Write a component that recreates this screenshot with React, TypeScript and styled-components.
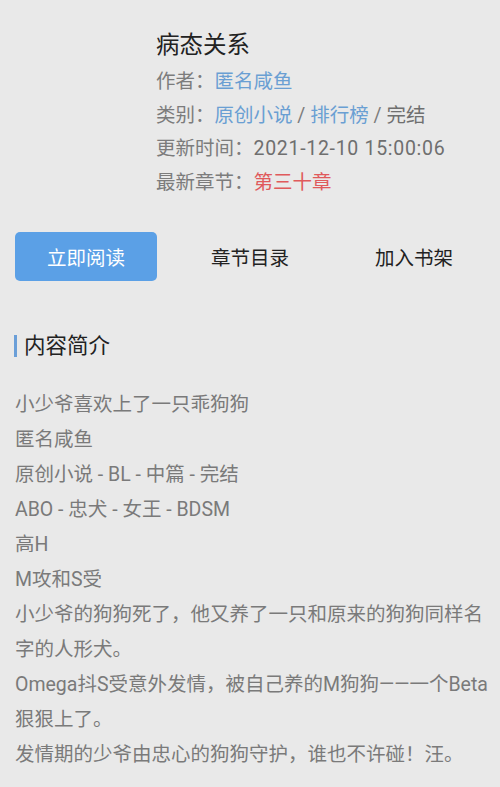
import styled, { createGlobalStyle } from "styled-components";

const GlobalStyle = createGlobalStyle`
  html, body {
    margin: 0;
    padding: 0;
    background: #e9e9e9;
  }
  body {
    font-family: Roboto, "Noto Sans CJK SC", "Noto Sans", sans-serif;
  }
`;

const Page = styled.main`
  min-height: 787px;
  background: #e9e9e9;
  padding: 0 15px;
  box-sizing: border-box;
`;

/* 书籍信息 */
const Info = styled.section`
  padding: 28px 0 0 141px;
`;

const Title = styled.h1`
  margin: 0 0 3px;
  font-size: 23.5px;
  font-weight: 400;
  line-height: 34px;
  color: #222;
`;

const InfoRow = styled.div`
  font-size: 19.5px;
  line-height: 33.5px;
  color: #7c7c7c;
  white-space: nowrap;
`;

const Link = styled.span`
  color: #6a9fd3;
`;

const Latest = styled.span`
  color: #e05a5c;
`;

const Value = styled.span`
  color: #6f6f6f;
`;

const Time = styled(Value)`
  letter-spacing: 0.7px;
`;

/* 操作按钮 */
const Actions = styled.div`
  display: flex;
  gap: 22px;
  margin-top: 33px;
`;

const ActionButton = styled.button<{ $primary?: boolean }>`
  width: 143px;
  height: 49px;
  border: 0;
  border-radius: 5px;
  font-family: inherit;
  font-size: 19.5px;
  padding: 0;
  background: ${({ $primary }) => ($primary ? "#5ba0e6" : "transparent")};
  color: ${({ $primary }) => ($primary ? "#fff" : "#222")};
`;

/* 内容简介 */
const SectionTitle = styled.h2`
  display: flex;
  align-items: center;
  gap: 7px;
  margin: 49px 0 0 -1px;
  font-size: 21.5px;
  font-weight: 400;
  line-height: 32px;
  color: #222;
  &::before {
    content: "";
    width: 3px;
    height: 22px;
    background: #6b9fd8;
  }
`;

const Intro = styled.div`
  margin-top: 25px;
  margin-right: -4px;
  font-size: 19.5px;
  line-height: 35px;
  color: #7a7a7a;
`;

const IntroLine = styled.p`
  margin: 0;
`;

const introLines = [
  "小少爷喜欢上了一只乖狗狗",
  "匿名咸鱼",
  "原创小说 - BL - 中篇 - 完结",
  "ABO - 忠犬 - 女王 - BDSM",
  "高H",
  "M攻和S受",
  "小少爷的狗狗死了，他又养了一只和原来的狗狗同样名字的人形犬。",
  "Omega抖S受意外发情，被自己养的M狗狗——一个Beta狠狠上了。",
  "发情期的少爷由忠心的狗狗守护，谁也不许碰！汪。",
];

export default function App() {
  return (
    <>
      <GlobalStyle />
      <Page>
        <Info>
          <Title>病态关系</Title>
          <InfoRow>
            作者：<Link>匿名咸鱼</Link>
          </InfoRow>
          <InfoRow>
            类别：<Link>原创小说</Link> / <Link>排行榜</Link> / <Value>完结</Value>
          </InfoRow>
          <InfoRow>
            更新时间：<Time>2021-12-10 15:00:06</Time>
          </InfoRow>
          <InfoRow>
            最新章节：<Latest>第三十章</Latest>
          </InfoRow>
        </Info>
        <Actions>
          <ActionButton $primary>立即阅读</ActionButton>
          <ActionButton>章节目录</ActionButton>
          <ActionButton>加入书架</ActionButton>
        </Actions>
        <SectionTitle>内容简介</SectionTitle>
        <Intro>
          {introLines.map((line) => (
            <IntroLine key={line}>{line}</IntroLine>
          ))}
        </Intro>
      </Page>
    </>
  );
}
